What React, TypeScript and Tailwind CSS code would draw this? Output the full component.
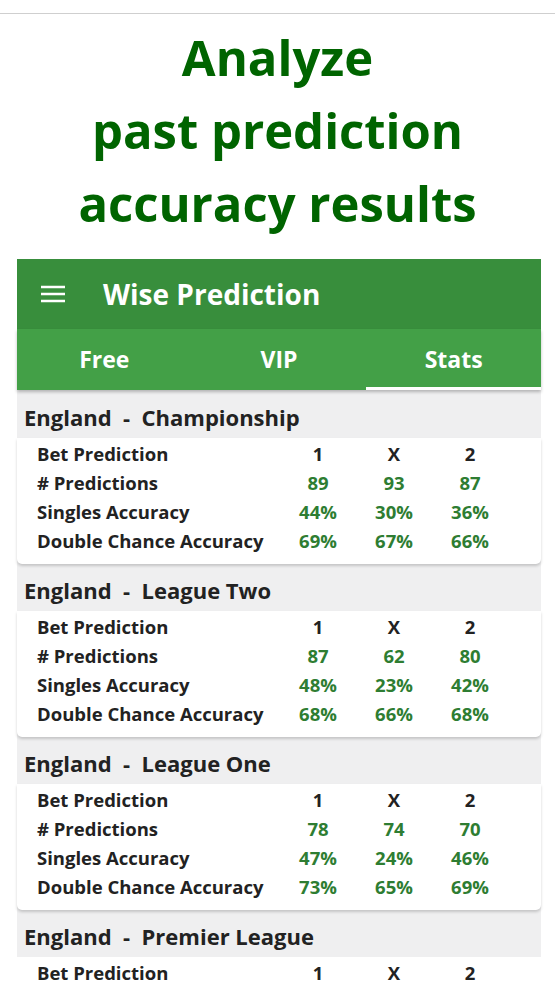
type League = {
  name: string;
  counts: string[];
  singles: string[];
  double: string[];
  headOnly?: boolean;
};

const leagues: League[] = [
  {
    name: "Championship",
    counts: ["89", "93", "87"],
    singles: ["44%", "30%", "36%"],
    double: ["69%", "67%", "66%"],
  },
  {
    name: "League Two",
    counts: ["87", "62", "80"],
    singles: ["48%", "23%", "42%"],
    double: ["68%", "66%", "68%"],
  },
  {
    name: "League One",
    counts: ["78", "74", "70"],
    singles: ["47%", "24%", "46%"],
    double: ["73%", "65%", "69%"],
  },
  {
    // only the first row is in view at the bottom of the screen
    name: "Premier League",
    counts: [],
    singles: [],
    double: [],
    headOnly: true,
  },
];

function Row({ label, values, green }: { label: string; values: string[]; green?: boolean }) {
  return (
    <div className="grid h-[29px] grid-cols-[243px_76px_76px_76px] items-center pl-[20px]">
      <span className="text-[18.5px] font-bold text-[#222]">{label}</span>
      {values.map((v, i) => (
        <span
          key={i}
          className={
            green
              ? "text-center text-[18.5px] font-bold text-[#2e7d32]"
              : "text-center text-[18.5px] font-bold text-[#222]"
          }
        >
          {v}
        </span>
      ))}
    </div>
  );
}

function LeagueCard({ league }: { league: League }) {
  return (
    <div className="mb-[5px]">
      <div className="flex h-[42px] items-center px-[7px] text-[22px] font-bold text-[#222] whitespace-pre">
        {"England  -  " + league.name}
      </div>
      <div
        className={
          league.headOnly
            ? "bg-white pt-px pb-[60px]"
            : "rounded-b-[5px] bg-white pt-px pb-[9px] shadow-[0_2px_3px_rgba(0,0,0,0.18)]"
        }
      >
        <Row label="Bet Prediction" values={["1", "X", "2"]} />
        {!league.headOnly && (
          <>
            <Row label="# Predictions" values={league.counts} green />
            <Row label="Singles Accuracy" values={league.singles} green />
            <Row label="Double Chance Accuracy" values={league.double} green />
          </>
        )}
      </div>
    </div>
  );
}

export default function App() {
  return (
    <div className="h-[1000px] overflow-hidden bg-white font-['Open_Sans',sans-serif]">
      <div className="h-[13px]" />
      <div className="h-px bg-[#cfcfcf]" />
      <h1 className="pt-[7px] text-center text-[49px] leading-[73px] font-bold text-[#006400]">
        Analyze
        <br />
        past prediction
        <br />
        accuracy results
      </h1>

      <div className="mt-[19px] ml-[17px] w-[524px] bg-[#efeff0]">
        <div className="flex h-[70px] items-center bg-[#388e3c] text-white">
          <svg className="ml-[24px] h-[18px] w-[24px]" viewBox="0 0 24 18" fill="none">
            <path d="M0 2h24M0 9h24M0 16h24" stroke="white" strokeWidth="2.6" />
          </svg>
          <span className="ml-[38px] text-[28px] font-bold">Wise Prediction</span>
        </div>
        <div className="grid h-[61px] grid-cols-3 bg-[#43a047] text-[23px] font-bold text-white shadow-[0_2px_3px_rgba(0,0,0,0.25)]">
          <div className="flex items-center justify-center">Free</div>
          <div className="flex items-center justify-center">VIP</div>
          <div className="flex items-center justify-center border-b-[3px] border-white pt-[3px]">
            Stats
          </div>
        </div>
        <div className="pt-[6px]">
          {leagues.map((l) => (
            <LeagueCard key={l.name} league={l} />
          ))}
        </div>
      </div>
    </div>
  );
}
